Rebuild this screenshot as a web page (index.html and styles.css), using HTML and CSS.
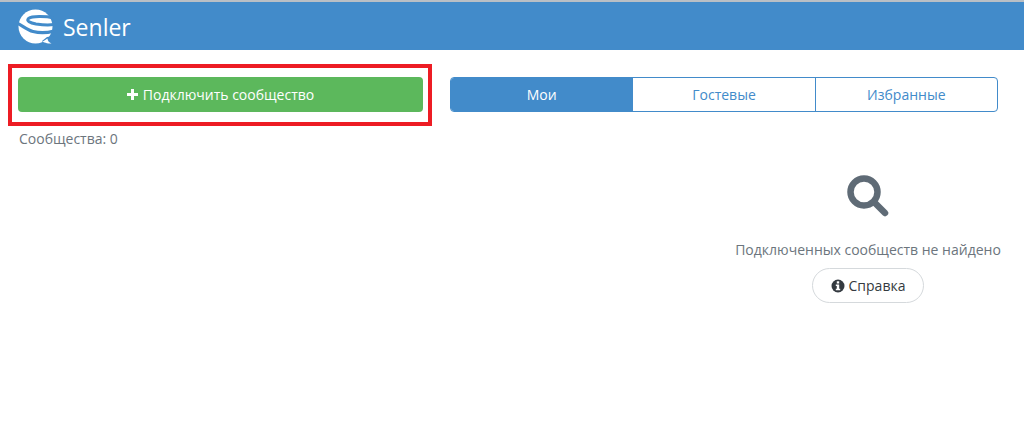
FILE: index.html
```html
<!DOCTYPE html>
<html>
<head>
<meta charset="utf-8">
<title>Senler</title>
<link rel="stylesheet" href="styles.css">
</head>
<body>
<header class="topbar">
	<svg class="logo" width="36" height="36" viewBox="0 0 36 36">
		<circle cx="17.500" cy="17.500" r="17" fill="#fff"/>
		<path fill="none" stroke="#428bca" stroke-width="3" d="M36 9 C27 7 14 7 10.500 9.500 C8 12 12 14 18 15 C25 16 30 16.500 36 15.500"/>
		<path fill="none" stroke="#428bca" stroke-width="3.200" d="M-1 14 C5 17 9 21 15 22.500 C21 24 27 24.500 36 22"/>
		<path fill="#428bca" d="M24 32 L29 28 L36 27 L36 36 L27 36 Z"/>
		<path fill="#fff" d="M24.500 32.800 L29.500 29.500 C29.500 31.500 31 33.500 33.500 34.500 C30.500 34.800 28 34 26.500 33.500 Z"/>
	</svg>
	<span class="brand">Senler</span>
</header>
<main class="page">
	<section class="left-col">
		<div class="mark-box">
			<button class="btn-add">
				<svg class="ico-plus" width="11" height="11" viewBox="0 0 11 11"><path fill="#fff" d="M4 0h3v4h4v3H7v4H4V7H0V4h4z"/></svg>
				Подключить сообщество
			</button>
		</div>
		<div class="count">Сообщества: 0</div>
	</section>
	<section class="right-col">
		<nav class="tabs">
			<div class="tab active">Мои</div>
			<div class="tab">Гостевые</div>
			<div class="tab">Избранные</div>
		</nav>
		<div class="empty">
			<svg class="ico-search" width="44" height="44" viewBox="0 0 44 44">
				<circle cx="18" cy="18" r="13.500" fill="none" stroke="#5f6b76" stroke-width="6.500"/>
				<path d="M28 28 L39 39" stroke="#5f6b76" stroke-width="6.500" stroke-linecap="round"/>
			</svg>
			<div class="empty-text">Подключенных сообществ не найдено</div>
			<button class="btn-help">
				<svg width="14" height="14" viewBox="0 0 14 14">
					<circle cx="7" cy="7" r="6.500" fill="#343a40"/>
					<rect x="5.800" y="2.300" width="2.400" height="2.200" fill="#fff"/>
					<path fill="#fff" d="M4.800 5.500h3.400v4.300h1v1.400H4.800V9.800h1V6.900h-1z"/>
				</svg>
				Справка
			</button>
		</div>
	</section>
</main>
</body>
</html>
```

FILE: styles.css
```css
body {
	margin: 0;
	height: 448px;
	overflow: hidden;
	background: #fff;
	font-family: "Open Sans", "Noto Sans", sans-serif;
	font-size: 14px;
	color: #6c757d;
}
.topbar {
	display: flex;
	align-items: center;
	height: 48px;
	padding-left: 18px;
	background: #428bca;
	border-top: 2px solid #b9bfc5;
}
.logo {
	margin-top: 2px;
	margin-right: 9px;
}
.brand {
	margin-top: 2px;
	font-size: 23px;
	color: #fff;
}
.page {
	display: flex;
	align-items: flex-start;
	padding: 14px 0 0 8px;
}
.left-col {
	flex: none;
	width: 424px;
	margin-right: 18px;
}
.mark-box {
	box-sizing: border-box;
	height: 62px;
	padding: 9px 5px 0 6px;
	border: 4px solid #ed1c24;
}
.btn-add {
	display: flex;
	align-items: center;
	justify-content: center;
	gap: 5px;
	width: 100%;
	height: 35px;
	padding: 0;
	border: none;
	border-radius: 4px;
	background: #5cb85c;
	color: #fff;
	font-family: inherit;
	font-size: 14px;
}
.count {
	margin-top: 4px;
	margin-left: 11px;
	line-height: 18px;
}
.right-col {
	flex: none;
	width: 548px;
	padding-top: 13px;
}
.tabs {
	display: flex;
	height: 35px;
	box-sizing: border-box;
	border: 1px solid #428bca;
	border-radius: 4px;
	overflow: hidden;
}
.tab {
	flex: 1;
	display: flex;
	align-items: center;
	justify-content: center;
	color: #428bca;
	border-left: 1px solid #428bca;
}
.tab:first-child {
	border-left: none;
}
.tab.active {
	background: #428bca;
	color: #fff;
}
.empty {
	display: flex;
	flex-direction: column;
	align-items: center;
	margin-top: 62px;
	margin-left: 282px;
	width: 272px;
}
.empty-text {
	margin-top: 23px;
	white-space: nowrap;
	line-height: 18px;
}
.btn-help {
	display: flex;
	align-items: center;
	justify-content: center;
	gap: 4px;
	width: 112px;
	height: 35px;
	margin-top: 9px;
	padding: 0;
	background: #fff;
	border: 1px solid #d5d9dc;
	border-radius: 18px;
	color: #343a40;
	font-family: inherit;
	font-size: 14px;
}
```
